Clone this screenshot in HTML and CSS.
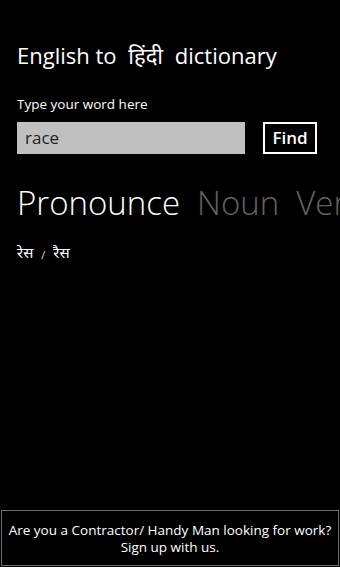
FILE: index.html
```html
<!DOCTYPE html>
<html lang="en">
<head>
<meta charset="UTF-8">
<meta name="viewport" content="width=device-width, initial-scale=1.0">
<title>English to Hindi dictionary</title>
<link rel="stylesheet" href="styles.css">
</head>
<body>
<div class="page">
  <h1 class="title">English to <span class="hi title-hi">हिंदी</span> dictionary</h1>

  <form class="search" onsubmit="return false">
    <label for="word">Type your word here</label>
    <div class="search-row">
      <input type="text" id="word" value="race">
      <button type="submit" class="find">Find</button>
    </div>
  </form>

  <div class="pivot">
    <span class="pivot-item active">Pronounce</span>
    <span class="pivot-item">Noun</span>
    <span class="pivot-item">Verb</span>
  </div>

  <p class="result"><span class="hi">रेस</span><span class="sep">/</span><span class="hi">रैस</span></p>
</div>

<div class="ad">
  <p>Are you a Contractor/ Handy Man looking for work?</p>
  <p>Sign up with us.</p>
</div>
</body>
</html>
```
FILE: styles.css
```css
html, body {
  margin: 0;
  height: 100%;
}
body {
  background-color: #000;
  color: #fff;
  font-family: "Open Sans", "Noto Sans", "Noto Sans Devanagari", sans-serif;
  display: flex;
  flex-direction: column;
  overflow: hidden;
}
.page {
  flex: 1;
  padding: 0 17px;
  overflow: hidden;
}
.hi {
  font-family: "Noto Sans Devanagari", "Noto Sans", "Lohit Devanagari", sans-serif;
}
.title {
  font-size: 22px;
  font-weight: normal;
  margin: 40px 0 0;
  line-height: 30px;
  white-space: nowrap;
}
.title-hi {
  margin: 0 6px;
}
.search {
  margin-top: 21px;
}
.search label {
  display: block;
  font-size: 13.5px;
  line-height: 18px;
}
.search-row {
  display: flex;
  margin-top: 9px;
  gap: 18px;
}
.search input {
  width: 228px;
  height: 32px;
  box-sizing: border-box;
  border: none;
  background-color: #c0c0c0;
  color: #222;
  font-family: inherit;
  font-size: 17px;
  padding: 0 0 2px 8px;
  outline: none;
}
.find {
  width: 54px;
  height: 32px;
  box-sizing: border-box;
  border: 2px solid #fff;
  background-color: #000;
  color: #fff;
  font-family: inherit;
  font-size: 17px;
  font-weight: 600;
  padding: 0 0 2px;
}
.pivot {
  margin-top: 29px;
  display: flex;
  gap: 17px;
  white-space: nowrap;
  font-size: 33px;
  font-weight: 300;
  line-height: 40px;
}
.pivot-item {
  color: #636363;
}
.pivot-item.active {
  color: #fff;
}
.result {
  margin: 22px 0 0;
  font-size: 15px;
  display: flex;
  align-items: center;
  gap: 8px;
}
.sep {
  font-size: 11px;
  color: #ddd;
}
.ad {
  margin: 0 1px 1px;
  border: 1px solid #6e6e6e;
  height: 56px;
  box-sizing: border-box;
  display: flex;
  flex-direction: column;
  align-items: center;
  justify-content: center;
  text-align: center;
  font-size: 13.5px;
  line-height: 17px;
  padding-top: 1px;
}
.ad p {
  margin: 0;
  white-space: nowrap;
}
```
